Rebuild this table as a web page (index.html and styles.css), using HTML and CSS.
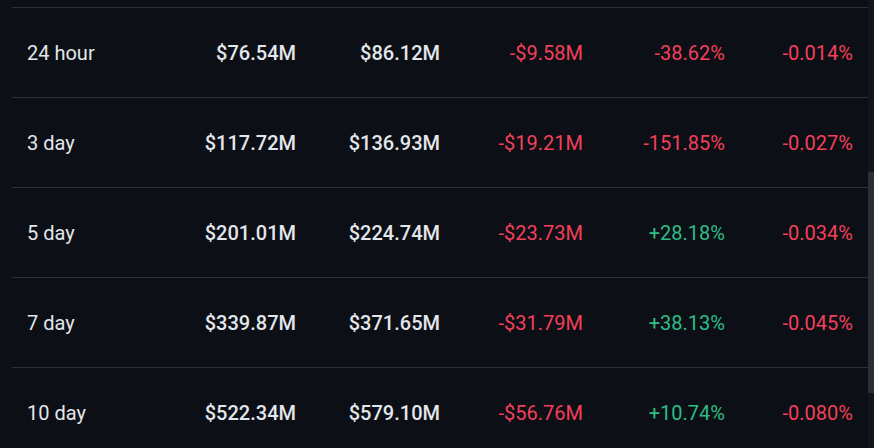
FILE: index.html
```html
<!DOCTYPE html>
<html>
<head>
<meta charset="utf-8">
<link rel="stylesheet" href="styles.css">
</head>
<body>
<div class="page">
  <div class="main">
    <div class="row">
      <div class="label">24 hour</div>
      <div class="num">$76.54M</div>
      <div class="num">$86.12M</div>
      <div class="num red">-$9.58M</div>
      <div class="num red">-38.62%</div>
      <div class="num red">-0.014%</div>
    </div>
    <div class="row">
      <div class="label">3 day</div>
      <div class="num">$117.72M</div>
      <div class="num">$136.93M</div>
      <div class="num red">-$19.21M</div>
      <div class="num red">-151.85%</div>
      <div class="num red">-0.027%</div>
    </div>
    <div class="row">
      <div class="label">5 day</div>
      <div class="num">$201.01M</div>
      <div class="num">$224.74M</div>
      <div class="num red">-$23.73M</div>
      <div class="num green">+28.18%</div>
      <div class="num red">-0.034%</div>
    </div>
    <div class="row">
      <div class="label">7 day</div>
      <div class="num">$339.87M</div>
      <div class="num">$371.65M</div>
      <div class="num red">-$31.79M</div>
      <div class="num green">+38.13%</div>
      <div class="num red">-0.045%</div>
    </div>
    <div class="row">
      <div class="label">10 day</div>
      <div class="num">$522.34M</div>
      <div class="num">$579.10M</div>
      <div class="num red">-$56.76M</div>
      <div class="num green">+10.74%</div>
      <div class="num red">-0.080%</div>
    </div>
  </div>
  <div class="scrollbar"><div class="thumb"></div></div>
</div>
</body>
</html>
```
FILE: styles.css
```css
html, body {
  margin: 0;
  padding: 0;
  background: #0c0f15;
  overflow: hidden;
}
.page {
  display: flex;
  width: 874px;
  height: 448px;
  overflow: hidden;
  font-family: Roboto, "Liberation Sans", sans-serif;
}
.main {
  flex: 1;
  padding: 7px 0 0 12px;
}
.row {
  box-sizing: border-box;
  display: grid;
  grid-template-columns: 125px 144px 144px 143px 142px 128px;
  align-items: center;
  height: 90px;
  border-top: 1px solid #2b3039;
  padding: 1px 15px 0;
  font-size: 20px;
  color: #e3e6ea;
}
.label {
  font-weight: 400;
}
.num {
  text-align: right;
  font-weight: 500;
}
.red {
  color: #f2405a;
  font-weight: 400;
}
.green {
  color: #2ebd85;
  font-weight: 400;
}
.scrollbar {
  width: 6px;
  background: #12151c;
}
.thumb {
  margin-top: 172px;
  height: 221px;
  background: #2a2e36;
}
```
